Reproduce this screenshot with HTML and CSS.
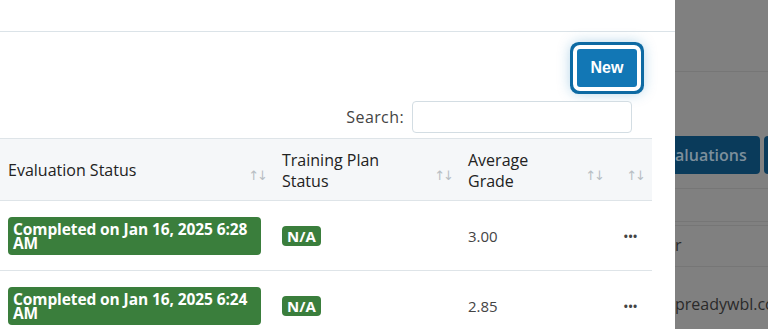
FILE: index.html
```html
<!DOCTYPE html>
<html lang="en">

<head>
	<meta charset="utf-8" />
	<meta name="viewport" content="width=device-width, initial-scale=1" />
	<title>Evaluations</title>
	<link rel="stylesheet" href="styles.css">
</head>

<body>
	<div class="panel">
		<div class="panel-header"></div>
		<div class="panel-body">
			<div class="toolbar">
				<button class="btn-new" type="button">New</button>
			</div>
			<div class="search">
				<label for="search">Search:</label>
				<input type="text" id="search">
			</div>
			<table class="grid">
				<thead>
					<tr>
						<th class="col-status">Evaluation Status<span class="sort">&uarr;&darr;</span></th>
						<th class="col-plan">Training Plan Status<span class="sort">&uarr;&darr;</span></th>
						<th class="col-grade">Average Grade<span class="sort">&uarr;&darr;</span></th>
						<th class="col-actions"><span class="sort">&uarr;&darr;</span></th>
					</tr>
				</thead>
				<tbody>
					<tr>
						<td><span class="badge badge-wide">Completed on Jan 16, 2025 6:28 AM</span></td>
						<td><span class="badge">N/A</span></td>
						<td>3.00</td>
						<td class="dots">&bull;&bull;&bull;</td>
					</tr>
					<tr>
						<td><span class="badge badge-wide">Completed on Jan 16, 2025 6:24 AM</span></td>
						<td><span class="badge">N/A</span></td>
						<td>2.85</td>
						<td class="dots">&bull;&bull;&bull;</td>
					</tr>
				</tbody>
			</table>
		</div>
	</div>
	<div class="backdrop">
		<div class="bd-top"></div>
		<div class="bd-buttons">
			<span class="bd-btn">aluations</span>
			<span class="bd-btn bd-btn-small"></span>
		</div>
		<div class="bd-gap"></div>
		<div class="bd-empty"></div>
		<div class="bd-cell">r</div>
		<div class="bd-email">preadywbl.com</div>
	</div>
</body>

</html>
```

FILE: styles.css
```css
html,
body {
	margin: 0;
	height: 100%;
	overflow: hidden;
}
body {
	display: flex;
	font-family: "Open Sans", "DejaVu Sans", sans-serif;
	font-size: 14px;
	color: #333333;
	background-color: #808080;
}
.panel {
	width: 675px;
	flex: none;
	background-color: #ffffff;
	overflow: hidden;
}
.panel-header {
	height: 31px;
	border-bottom: solid 1px #dbe3e8;
}
.panel-body {
	padding: 16px 23px 0 0;
}
.toolbar {
	display: flex;
	justify-content: flex-end;
	padding-right: 15px;
}
.btn-new {
	width: 60px;
	height: 38px;
	margin-top: 1px;
	border: none;
	border-radius: 3px;
	background-color: #1277b5;
	color: #ffffff;
	font-family: "Liberation Sans", Arial, sans-serif;
	font-weight: bold;
	font-size: 16px;
	box-shadow: 0 0 0 4px #ffffff, 0 0 0 7px #0d6aa3, 0 0 14px 6px rgba(17, 119, 181, 0.35);
}
.search {
	display: flex;
	justify-content: flex-end;
	align-items: center;
	gap: 8px;
	margin-top: 14px;
	padding-right: 20px;
	color: #444444;
	font-size: 16px;
	letter-spacing: 0.4px;
}
.search input {
	width: 220px;
	height: 32px;
	box-sizing: border-box;
	border: solid 1px #d3dde3;
	border-radius: 4px;
}
.grid {
	width: 652px;
	margin-top: 5px;
	border-collapse: collapse;
	table-layout: fixed;
}
.grid th {
	position: relative;
	height: 62px;
	padding: 2px 26px 0 8px;
	box-sizing: border-box;
	text-align: left;
	font-weight: 500;
	font-size: 16px;
	line-height: 21px;
	color: #222222;
	background-color: #f5f7f9;
	border-top: solid 1px #dee4e8;
	border-bottom: solid 1px #dee4e8;
}
.grid td {
	height: 70px;
	padding: 0 8px;
	box-sizing: border-box;
	border-bottom: solid 1px #dee4e8;
	font-size: 15px;
	color: #444444;
}
.grid th.col-plan {
	width: 186px;
	padding-right: 70px;
}
.grid th.col-grade {
	width: 151px;
	padding-right: 60px;
}
.col-status {
	width: 274px;
}
.sort {
	position: absolute;
	right: 8px;
	bottom: 14px;
	font-size: 13px;
	letter-spacing: -2px;
	color: #b8bec4;
	font-weight: normal;
}
.badge {
	display: inline-block;
	padding: 3px 5px;
	border-radius: 4px;
	background-color: #3a7e3c;
	color: #ffffff;
	font-weight: bold;
	font-size: 15px;
	line-height: 14px;
}
.badge-wide {
	display: block;
	width: 253px;
	box-sizing: border-box;
	padding: 5px 5px 5px 5px;
	font-size: 15.5px;
	letter-spacing: -0.1px;
}
.dots {
	font-size: 12px;
	color: #222222;
	letter-spacing: -1px;
	text-align: right;
	padding-right: 15px !important;
}
.backdrop {
	flex: 1;
	overflow: hidden;
	color: #2a2a2a;
	white-space: nowrap;
}
.bd-top {
	height: 71px;
	border-bottom: solid 1px #767676;
}
.bd-buttons {
	display: flex;
	gap: 4px;
	margin-top: 64px;
}
.bd-btn {
	height: 38px;
	padding: 0 13px 0 0;
	display: flex;
	align-items: center;
	border-radius: 0 4px 4px 0;
	background-color: #0a3b5b;
	color: #7d8f9b;
	font-weight: 600;
	font-size: 16px;
}
.bd-btn-small {
	width: 20px;
	padding: 0;
	border-radius: 4px 0 0 4px;
}
.bd-gap {
	height: 14px;
	border-bottom: solid 1px #767676;
}
.bd-empty {
	height: 32px;
	border-bottom: solid 1px #767676;
	margin-bottom: 3px;
}
.bd-cell {
	height: 40px;
	line-height: 38px;
	font-size: 16px;
	border-top: solid 1px #767676;
	border-bottom: solid 1px #767676;
}
.bd-email {
	height: 70px;
	line-height: 74px;
	font-size: 16px;
}
```
